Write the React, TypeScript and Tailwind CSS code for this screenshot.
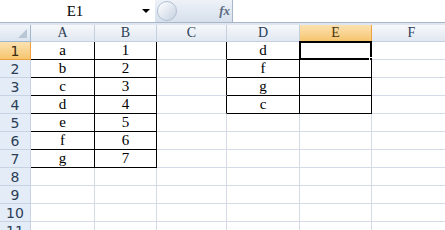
import React from 'react'

const COLS = [
  { name: 'A', w: 64 },
  { name: 'B', w: 62 },
  { name: 'C', w: 70 },
  { name: 'D', w: 73 },
  { name: 'E', w: 72 },
  { name: 'F', w: 80 },
]

const DATA: Record<string, string> = {
  A1: 'a', A2: 'b', A3: 'c', A4: 'd', A5: 'e', A6: 'f', A7: 'g',
  B1: '1', B2: '2', B3: '3', B4: '4', B5: '5', B6: '6', B7: '7',
  D1: 'd', D2: 'f', D3: 'g', D4: 'c',
}

// ranges with thin black borders: [colStart, colEnd, rowStart, rowEnd]
const BOXES = [
  [0, 1, 1, 7],
  [3, 4, 1, 4],
]

const inBox = (c: number, r: number) =>
  BOXES.some(([c0, c1, r0, r1]) => c >= c0 && c <= c1 && r >= r0 && r <= r1)

const ROWS = Array.from({ length: 11 }, (_, i) => i + 1)

const serif = { fontFamily: '"Liberation Serif", "DejaVu Serif", serif' }
const sans = { fontFamily: '"DejaVu Sans", "Liberation Sans", sans-serif' }

export default function App() {
  return (
    <div className="w-[445px] h-[230px] overflow-hidden bg-[#dfe6ef] select-none">
      {/* formula bar */}
      <div className="flex h-[23px] border-b border-[#a7b6ca] bg-[#ccd8e7]">
        <div className="relative flex w-[155px] items-center bg-white">
          <span className="flex-1 pl-[8px] text-center text-[15px] text-black" style={serif}>
            E1
          </span>
          <span className="mr-[5px] h-0 w-0 border-x-[4px] border-t-[4px] border-x-transparent border-t-black" />
        </div>
        <div className="flex w-[77px] items-center bg-gradient-to-b from-[#eef2f8] to-[#d6e0ec]">
          <div className="ml-[2px] h-[20px] w-[20px] rounded-full border border-[#b3c0d2] bg-gradient-to-br from-white via-[#e3e9f1] to-[#c3cfde]" />
          <div className="flex-1" />
          <span className="mr-[2px] text-[13px] font-bold italic text-[#5a6a80]" style={serif}>
            fx
          </span>
        </div>
        <div className="flex-1 border-l border-[#a7b6ca] bg-white" />
      </div>

      {/* sheet */}
      <div className="mt-[2px]">
        {/* column headers */}
        <div className="flex h-[17px]">
          <div className="relative w-[31px] shrink-0 border-r border-b border-[#9eb6ce] bg-gradient-to-b from-[#f1f5fa] to-[#dbe4ef]">
            <span className="absolute right-[3px] bottom-[3px] h-0 w-0 border-l-[9px] border-t-[9px] border-l-transparent border-t-transparent border-b-0 border-r-0 [border-bottom:9px_solid_#b9c6d6]" />
          </div>
          {COLS.map((col) => {
            const sel = col.name === 'E'
            return (
              <div
                key={col.name}
                className={`flex shrink-0 items-center justify-center border-r border-b text-[14px] leading-none ${
                  sel
                    ? 'border-[#f0a040] bg-gradient-to-b from-[#fbe2b1] to-[#f6c56d] text-[#4a3410]'
                    : 'border-[#c5d0de] bg-gradient-to-b from-[#f6f8fb] to-[#e1e8f1] text-[#2c3e57]'
                }`}
                style={{ width: col.w, ...serif }}
              >
                {col.name}
              </div>
            )
          })}
        </div>

        {ROWS.map((r) => (
          <div key={r} className="flex h-[18px]">
            <div
              className={`flex w-[31px] shrink-0 items-center justify-center border-r border-b text-[14px] leading-none ${
                r === 1
                  ? 'border-[#f0a040] bg-gradient-to-b from-[#fbe2b1] to-[#f6c56d] text-[#3a2a10]'
                  : 'border-[#c7d3e2] bg-[#e4ecf7] text-[#2c3e57]'
              }`}
              style={sans}
            >
              {r}
            </div>
            {COLS.map((col, c) => {
              const key = `${col.name}${r}`
              const rightBlack = inBox(c, r) || inBox(c + 1, r)
              const bottomBlack = inBox(c, r) || inBox(c, r + 1)
              const active = key === 'E1'
              return (
                <div
                  key={key}
                  className={`relative flex shrink-0 items-center justify-center border-r border-b bg-white text-[15px] text-black ${
                    rightBlack ? 'border-r-black' : 'border-r-[#d4dbe6]'
                  } ${bottomBlack ? 'border-b-black' : 'border-b-[#d4dbe6]'}`}
                  style={{ width: col.w, ...serif }}
                >
                  {DATA[key]}
                  {active && (
                    <>
                      <span className="absolute -left-[1px] -top-[1px] -right-[1px] -bottom-[1px] border-2 border-black" />
                      <span className="absolute -right-[3px] -bottom-[3px] h-[5px] w-[5px] border border-white bg-black" />
                    </>
                  )}
                </div>
              )
            })}
          </div>
        ))}
      </div>
    </div>
  )
}
